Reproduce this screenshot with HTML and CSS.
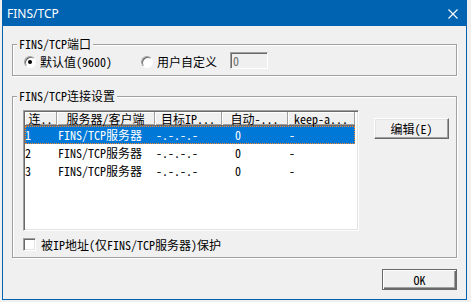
FILE: index.html
```html
<!DOCTYPE html>
<html lang="zh-CN">
<head>
    <meta charset="utf-8">
    <title>FINS/TCP</title>
    <link rel="stylesheet" href="styles.css">
</head>
<body>
    <div class="window">
        <div class="titlebar">
            <span class="title">FINS/TCP</span>
            <svg class="close" width="10" height="10" viewBox="0 0 10 10">
                <path d="M0.5 0.5 L9.5 9.5 M9.5 0.5 L0.5 9.5" stroke="#fff" stroke-width="1.1" fill="none"/>
            </svg>
        </div>

        <div class="client">
            <!-- Port group -->
            <fieldset class="group port-group">
                <legend>FINS/TCP端口</legend>
                <div class="radio-row">
                    <label class="opt">
                        <span class="radio checked"></span>
                        <span>默认值(9600)</span>
                    </label>
                    <label class="opt opt-custom">
                        <span class="radio"></span>
                        <span>用户自定义</span>
                    </label>
                    <input class="port" type="text" value="0" disabled>
                </div>
            </fieldset>

            <!-- Connection group -->
            <fieldset class="group conn-group">
                <legend>FINS/TCP连接设置</legend>
                <div class="conn-body">
                    <div class="list">
                        <div class="head">
                            <div class="cell c1">连..</div>
                            <div class="cell c2">服务器/客户端</div>
                            <div class="cell c3">目标IP...</div>
                            <div class="cell c4">自动-...</div>
                            <div class="cell c5">keep-a...</div>
                        </div>
                        <div class="row selected">
                            <div class="cell c1">1</div>
                            <div class="cell c2">FINS/TCP服务器</div>
                            <div class="cell c3">-.-.-.-</div>
                            <div class="cell c4">0</div>
                            <div class="cell c5">-</div>
                        </div>
                        <div class="row">
                            <div class="cell c1">2</div>
                            <div class="cell c2">FINS/TCP服务器</div>
                            <div class="cell c3">-.-.-.-</div>
                            <div class="cell c4">0</div>
                            <div class="cell c5">-</div>
                        </div>
                        <div class="row">
                            <div class="cell c1">3</div>
                            <div class="cell c2">FINS/TCP服务器</div>
                            <div class="cell c3">-.-.-.-</div>
                            <div class="cell c4">0</div>
                            <div class="cell c5">-</div>
                        </div>
                    </div>
                    <button class="btn edit-btn" type="button">编辑(E)</button>
                </div>
                <label class="check-row">
                    <span class="check"></span>
                    <span>被IP地址(仅FINS/TCP服务器)保护</span>
                </label>
            </fieldset>

            <div class="footer">
                <button class="btn default" type="button">OK</button>
            </div>
        </div>
    </div>
</body>
</html>
```

FILE: styles.css
```css
/* General styling */
body {
    margin: 0;
    padding: 0;
    background-color: #f0f0f0;
    font-family: "Noto Sans Mono CJK SC", "Noto Sans CJK SC", monospace;
    font-size: 12px;
    color: #000;
}

.window {
    margin-left: 2px;
    width: 465px;
    height: 300px;
    box-sizing: border-box;
    border: 1px solid #0063b1;
    border-top: none;
    background-color: #f0f0f0;
}

.titlebar {
    height: 26px;
    background-color: #0063b1;
    color: #fff;
    display: flex;
    align-items: center;
    justify-content: space-between;
    padding: 0 8px 0 4px;
    font-family: "Noto Sans", sans-serif;
    font-size: 12px;
}

.titlebar .close {
    display: block;
    margin-top: 1px;
}

.client {
    padding: 12px 9px 0 9px;
}

/* Group boxes */
.group {
    margin: 0;
    padding: 0;
    width: 445px;
    box-sizing: border-box;
    border: 1px solid #a0a0a0;
    box-shadow: inset 1px 1px 0 #fff, 1px 1px 0 #fff;
}

.group legend {
    margin-left: 4px;
    padding: 0 2px;
    line-height: 12px;
    background-color: #f0f0f0;
}

.radio-row {
    display: flex;
    align-items: center;
    height: 14px;
    padding: 5px 0 6px 11px;
}

.opt {
    display: flex;
    align-items: center;
    gap: 4px;
    line-height: 12px;
}

.opt-custom {
    margin-left: 29px;
}

.radio {
    position: relative;
    width: 12px;
    height: 12px;
    box-sizing: border-box;
    border-radius: 50%;
    border: 1px solid;
    border-color: #a0a0a0 #fff #fff #a0a0a0;
    box-shadow: inset 1px 1px 0 #696969;
    background-color: #fff;
}

.radio.checked::after {
    content: "";
    position: absolute;
    left: 3px;
    top: 3px;
    width: 4px;
    height: 4px;
    border-radius: 50%;
    background-color: #000;
}

.port {
    margin: 0 0 3px 13px;
    width: 38px;
    height: 17px;
    box-sizing: border-box;
    padding: 0 0 0 2px;
    border: 1px solid;
    border-color: #a0a0a0 #fff #fff #a0a0a0;
    box-shadow: inset 1px 1px 0 #696969;
    background-color: #f0f0f0;
    color: #6d6d6d;
    font-family: inherit;
    font-size: 12px;
}

.conn-group {
    margin-top: 14px;
    padding-bottom: 6px;
}

.conn-body {
    display: flex;
    align-items: flex-start;
    padding: 8px 0 0 10px;
}

/* List view */
.list {
    width: 336px;
    height: 121px;
    box-sizing: border-box;
    padding: 1px 0 0 1px;
    border: 1px solid;
    border-color: #a0a0a0 #fff #fff #a0a0a0;
    box-shadow: inset 1px 1px 0 #696969, inset -1px -1px 0 #e3e3e3;
    background-color: #fff;
}

.head, .row {
    display: flex;
    width: 330px;
}

.head {
    height: 14px;
    box-sizing: border-box;
    border-bottom: 1px solid #696969;
    background-color: #f0f0f0;
}

.head .cell {
    box-sizing: border-box;
    text-align: center;
    line-height: 13px;
    border-right: 1px solid #a0a0a0;
    box-shadow: inset 1px 1px 0 #fff, inset 0 -1px 0 #a0a0a0;
    white-space: nowrap;
}

.row {
    height: 18px;
    line-height: 18px;
}

.row .cell {
    box-sizing: border-box;
    padding-left: 1px;
    white-space: nowrap;
}

.c1 { width: 32px; }
.c2 { width: 98px; }
.c3 { width: 67px; }
.c4 { width: 66px; }
.c5 { width: 67px; }

.row .c1 { padding-left: 0; }
.row .c4 { padding-left: 13px; }

.row.selected {
    background-color: #0078d7;
    color: #fff;
    outline: 1px dotted #ff8728;
    outline-offset: -1px;
}

/* Buttons */
.btn {
    width: 75px;
    height: 21px;
    box-sizing: border-box;
    padding: 0;
    background-color: #f0f0f0;
    border: 1px solid;
    border-color: #fff #696969 #696969 #fff;
    box-shadow: inset -1px -1px 0 #a0a0a0, inset 1px 1px 0 #e3e3e3;
    font-family: inherit;
    font-size: 12px;
    color: #000;
}

.edit-btn {
    margin: 8px 0 0 15px;
}

.btn.default {
    border-color: #696969;
    box-shadow: inset 1px 1px 0 #fff, inset -1px -1px 0 #696969, inset -2px -2px 0 #a0a0a0;
}

.check-row {
    display: flex;
    align-items: center;
    gap: 5px;
    margin: 7px 0 0 10px;
    line-height: 13px;
}

.check {
    width: 13px;
    height: 13px;
    box-sizing: border-box;
    border: 1px solid;
    border-color: #a0a0a0 #fff #fff #a0a0a0;
    box-shadow: inset 1px 1px 0 #696969, inset -1px -1px 0 #e3e3e3;
    background-color: #fff;
}

.footer {
    display: flex;
    justify-content: flex-end;
    margin-top: 11px;
}
```
